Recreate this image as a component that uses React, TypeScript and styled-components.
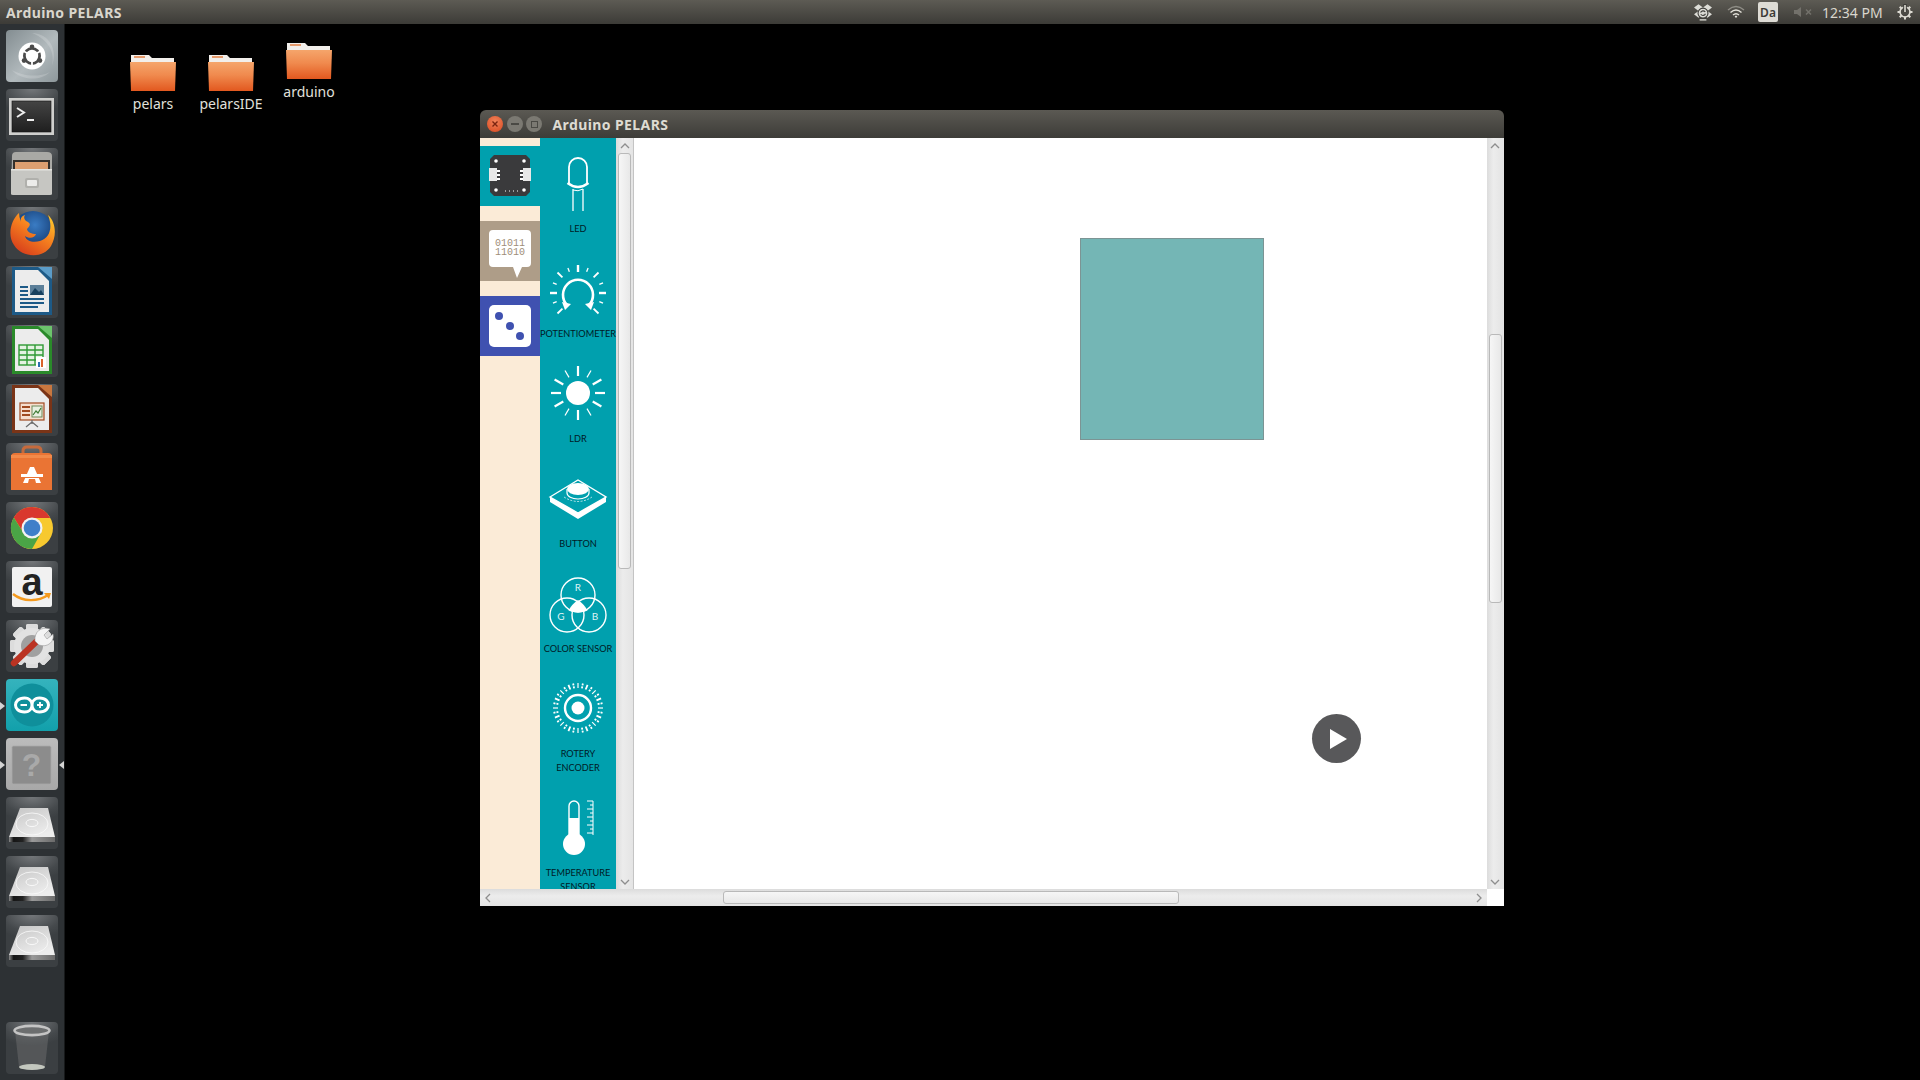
import styled, { createGlobalStyle } from "styled-components";

const TEAL = "#00a0ae";
const CREAM = "#fbebd7";

const GlobalStyle = createGlobalStyle`
  html, body {
    margin: 0;
    padding: 0;
    background: #000;
    overflow: hidden;
  }
  * {
    box-sizing: border-box;
  }
`;

const rays = (angles: number[], r1: number, r2: number, cx: number, cy: number) =>
  angles.map((a) => {
    const rad = (a * Math.PI) / 180;
    return {
      x1: cx + Math.sin(rad) * r1,
      y1: cy - Math.cos(rad) * r1,
      x2: cx + Math.sin(rad) * r2,
      y2: cy - Math.cos(rad) * r2,
    };
  });

/* launcher icons */

function DashIcon() {
  const gaps = rays([60, 180, 300], 5, 10.5, 26, 26);
  return (
    <svg width="52" height="52" viewBox="0 0 52 52">
      <path d="M26 3 C44 4 52 20 46 36 C50 18 38 8 26 3Z" fill="#fff" opacity="0.18" />
      <path d="M6 40 C14 50 34 52 44 42 C32 48 16 46 6 40Z" fill="#fff" opacity="0.18" />
      <circle cx="26" cy="26" r="13.5" fill="#fff" />
      <circle cx="26" cy="26" r="7.6" fill="none" stroke="#4a4a4a" strokeWidth="2.8" />
      {gaps.map((g, i) => (
        <line key={i} {...g} stroke="#fff" strokeWidth="1.8" />
      ))}
      <circle cx="26" cy="16.8" r="2.3" fill="#4a4a4a" />
      <circle cx="18" cy="30.6" r="2.3" fill="#4a4a4a" />
      <circle cx="34" cy="30.6" r="2.3" fill="#4a4a4a" />
    </svg>
  );
}

function TerminalIcon() {
  return (
    <svg width="52" height="52" viewBox="0 0 52 52">
      <defs>
        <linearGradient id="termGlass" x1="0" y1="0" x2="0" y2="1">
          <stop offset="0" stopColor="#444" />
          <stop offset="1" stopColor="#1f1f1f" />
        </linearGradient>
      </defs>
      <rect x="3" y="9" width="45" height="37" fill="#cfcfcd" />
      <rect x="6" y="12" width="39" height="31" fill="url(#termGlass)" stroke="#111" strokeWidth="0.6" />
      <path d="M11 19 L18 23.5 L11 28" fill="none" stroke="#eee" strokeWidth="2" />
      <rect x="21" y="30" width="7" height="2" fill="#eee" />
    </svg>
  );
}

function FilesIcon() {
  return (
    <svg width="52" height="52" viewBox="0 0 52 52">
      <path d="M6 8 Q6 4 10 4 H41 Q46 4 46 8 V46 H5Z" fill="#a9a9a5" />
      <rect x="7" y="12" width="37" height="10" fill="#35302b" />
      <rect x="9" y="14" width="33" height="7" fill="#dd9f70" />
      <path d="M5 21 H46 V46 Q46 47 44 47 H7 Q5 47 5 46Z" fill="#c6c6c2" />
      <rect x="5" y="21" width="41" height="1.5" fill="#e4e4e0" />
      <rect x="19" y="30" width="14" height="10" rx="2" fill="#b0b0ac" />
      <rect x="21" y="32" width="10" height="6" rx="1" fill="#ececea" />
    </svg>
  );
}

function FirefoxIcon() {
  return (
    <svg width="52" height="52" viewBox="0 0 52 52">
      <defs>
        <radialGradient id="ffBlue" cx="0.55" cy="0.35" r="0.6">
          <stop offset="0" stopColor="#3a7cc4" />
          <stop offset="1" stopColor="#12386f" />
        </radialGradient>
        <linearGradient id="ffOrange" x1="0.9" y1="0" x2="0.2" y2="1">
          <stop offset="0" stopColor="#ffd22e" />
          <stop offset="0.45" stopColor="#f6821f" />
          <stop offset="1" stopColor="#d5391b" />
        </linearGradient>
      </defs>
      <circle cx="27" cy="24" r="20" fill="url(#ffBlue)" />
      <path
        d="M13 6 C5 13 1 28 8 38 C16 51 37 52 45 39 C51 29 50 15 42 8 C47 20 44 31 34 34 C27 36 20 34 19 29 C23 32 29 31 30 27 C26 27 21 25 21 22 C24 19 25 17 22 15 C19 14 17 11 19 8 C16 9 14 11 15 15 C14 12 13 9 13 6Z"
        fill="url(#ffOrange)"
      />
    </svg>
  );
}

function DocIcon({ edge, accent, children }: { edge: string; accent: string; children: React.ReactNode }) {
  return (
    <svg width="52" height="52" viewBox="0 0 52 52">
      <path d="M6 1 H34 L46 13 V49 H6Z" fill={edge} />
      <path d="M9 4 H32 L43 15 V46 H9Z" fill="#ececec" />
      <path d="M32 1 H46 V13Z" fill={accent} />
      {children}
    </svg>
  );
}

function WriterIcon() {
  return (
    <DocIcon edge="#1d5a87" accent="#5b9cc8">
      <rect x="14" y="20" width="8" height="2" fill="#1d5a87" />
      <rect x="14" y="24" width="8" height="2" fill="#1d5a87" />
      <rect x="14" y="28" width="8" height="2" fill="#1d5a87" />
      <rect x="24" y="19" width="14" height="10" fill="#5c7f99" />
      <path d="M24 29 L29 22 L33 26 L35 24 L38 29Z" fill="#17405f" />
      <rect x="14" y="32" width="24" height="2" fill="#1d5a87" />
      <rect x="14" y="36" width="24" height="2" fill="#1d5a87" />
      <rect x="14" y="40" width="18" height="2" fill="#1d5a87" />
    </DocIcon>
  );
}

function CalcIcon() {
  return (
    <DocIcon edge="#2a8a2a" accent="#6cc46c">
      <rect x="13" y="20" width="24" height="20" fill="#e4f2e2" stroke="#2f9a35" strokeWidth="1.4" />
      <path d="M13 25 H37 M13 30 H37 M13 35 H37 M21 20 V40 M29 20 V40" stroke="#2f9a35" strokeWidth="1.4" />
      <rect x="30" y="32" width="10" height="11" fill="#fff" />
      <rect x="32" y="37" width="2" height="5" fill="#2d6fae" />
      <rect x="35" y="34" width="2" height="8" fill="#d9622b" />
    </DocIcon>
  );
}

function ImpressIcon() {
  return (
    <DocIcon edge="#7a3417" accent="#c9773f">
      <rect x="14" y="19" width="24" height="17" fill="#f6dfcf" stroke="#a04a20" strokeWidth="1.2" />
      <path d="M16 23 H24 M16 27 H24 M16 31 H24" stroke="#a04a20" strokeWidth="2" />
      <rect x="26" y="22" width="10" height="11" fill="#e8efe0" stroke="#6a8a5a" strokeWidth="1" />
      <path d="M27 31 L30 27 L32 29 L35 24" fill="none" stroke="#3e7b34" strokeWidth="1.2" />
      <path d="M26 36 V40 M26 38 L20 43 M26 38 L32 43" stroke="#6b6b6b" strokeWidth="1.2" />
    </DocIcon>
  );
}

function StoreIcon() {
  return (
    <svg width="52" height="52" viewBox="0 0 52 52">
      <path d="M17 15 V8 Q17 4 21 4 H31 Q35 4 35 8 V15" fill="none" stroke="#c56a3c" strokeWidth="3" />
      <path d="M5 14 Q5 10 9 10 H42 Q46 10 46 14 V47 H5Z" fill="#ea7434" />
      <path d="M5 12 H46 V15 H5Z" fill="#f28a4a" />
      <path d="M24 24 H28 L35 40 H30 L29 36 H23 L22 40 H17Z" fill="#fff" />
      <rect x="15" y="31" width="22" height="3" fill="#fff" />
      <rect x="15" y="34" width="22" height="1" fill="#ea7434" />
    </svg>
  );
}

function ChromeIcon() {
  return (
    <svg width="52" height="52" viewBox="0 0 52 52">
      <circle cx="26" cy="26" r="21" fill="#f7c92f" />
      <path d="M26 5 A21 21 0 0 0 7.8 15.5 L17.5 31 L26 16 H44.2 A21 21 0 0 0 26 5Z" fill="#d9382e" />
      <path d="M7.8 15.5 A21 21 0 0 0 26 47 L35 31 L17.5 31Z" fill="#4aa446" />
      <circle cx="26" cy="26" r="10.5" fill="#f2f2f2" />
      <circle cx="26" cy="26" r="8.3" fill="#3f7fc9" />
    </svg>
  );
}

function AmazonIcon() {
  return (
    <svg width="52" height="52" viewBox="0 0 52 52">
      <rect x="6" y="6" width="40" height="40" rx="2" fill="#f1f1f1" />
      <text x="26" y="34" textAnchor="middle" fontFamily="'Liberation Sans', sans-serif" fontWeight="700" fontSize="38" fill="#222">
        a
      </text>
      <path d="M7 33 C17 41 32 41 42 34" fill="none" stroke="#f49a1e" strokeWidth="2.4" />
      <path d="M38 32 L45 32 L43 38Z" fill="#f49a1e" />
    </svg>
  );
}

function SettingsIcon() {
  const teeth = [0, 45, 90, 135, 180, 225, 270, 315];
  return (
    <svg width="52" height="52" viewBox="0 0 52 52">
      {teeth.map((a) => (
        <rect key={a} x="20" y="4" width="12" height="44" rx="2" fill="#dcdcdc" transform={`rotate(${a} 26 26)`} />
      ))}
      <circle cx="26" cy="26" r="18" fill="#e2e2e2" />
      <circle cx="26" cy="26" r="11" fill="#a0a0a0" />
      <path d="M8 43 L32 20" stroke="#bb3322" strokeWidth="6.5" strokeLinecap="round" />
      <path d="M29 21 C28 12 35 6 44 9 L38 15 L41 19 L47 14 C49 22 41 28 33 25Z" fill="#f4f4f4" stroke="#999" strokeWidth="0.6" />
    </svg>
  );
}

function ArduinoIcon() {
  return (
    <svg width="52" height="52" viewBox="0 0 52 52">
      <circle cx="26" cy="26" r="21.5" fill="#0f8f9b" />
      <path
        d="M18.5 19 C12 19 9.5 23 9.5 26 C9.5 29 12 33 18.5 33 C24 33 26 29 26 26 C26 23 28 19 33.5 19 C40 19 42.5 23 42.5 26 C42.5 29 40 33 33.5 33 C28 33 26 29 26 26 C26 23 24 19 18.5 19Z"
        fill="none"
        stroke="#fff"
        strokeWidth="3"
      />
      <path d="M14.5 26 H21 M31 26 H37 M34 23 V29" stroke="#fff" strokeWidth="1.8" />
    </svg>
  );
}

function HelpIcon() {
  return (
    <svg width="52" height="52" viewBox="0 0 52 52">
      <rect x="6" y="8" width="39" height="38" rx="1.5" fill="#8c8c8c" stroke="#a8a8a8" strokeWidth="0.8" />
      <text x="25.5" y="38" textAnchor="middle" fontFamily="'Liberation Sans', sans-serif" fontWeight="700" fontSize="32" fill="#a9a9a9">
        ?
      </text>
    </svg>
  );
}

function DiskIcon({ id }: { id: string }) {
  return (
    <svg width="52" height="52" viewBox="0 0 52 52">
      <defs>
        <linearGradient id={id} x1="0" y1="0" x2="0.6" y2="1">
          <stop offset="0" stopColor="#c4c4c4" />
          <stop offset="1" stopColor="#ededed" />
        </linearGradient>
        <linearGradient id={`${id}Side`} x1="0" y1="0" x2="1" y2="0">
          <stop offset="0" stopColor="#8a8a8a" />
          <stop offset="0.1" stopColor="#151515" />
          <stop offset="0.3" stopColor="#222" />
          <stop offset="0.5" stopColor="#9a9a9a" />
          <stop offset="1" stopColor="#6a6a6a" />
        </linearGradient>
      </defs>
      <path d="M14 11 H42 L49 40 H3Z" fill={`url(#${id})`} />
      <rect x="3" y="40" width="46" height="5" fill={`url(#${id}Side)`} />
      <ellipse cx="26" cy="27" rx="16" ry="11" fill="none" stroke="#fafafa" strokeWidth="0.8" />
      <ellipse cx="26" cy="26" rx="6" ry="3.6" fill="none" stroke="#fafafa" strokeWidth="0.9" />
    </svg>
  );
}

function TrashIcon() {
  return (
    <svg width="52" height="52" viewBox="0 0 52 52">
      <path d="M9 9 L13 45 Q26 50 39 45 L43 9Z" fill="#8a8a8a" opacity="0.32" />
      <ellipse cx="26" cy="45" rx="13" ry="3" fill="#c3c7be" />
      <ellipse cx="26" cy="8.5" rx="17.5" ry="4.6" fill="#6c6e6f" stroke="#c4c4c4" strokeWidth="2.6" />
    </svg>
  );
}

/* tray icons */

function DropboxTray() {
  return (
    <svg width="18" height="18" viewBox="0 0 16 16">
      <path d="M4 1 L8 4 L4 7 L0 4Z M12 1 L16 4 L12 7 L8 4Z M4 7 L8 10 L4 13 L0 10Z M12 7 L16 10 L12 13 L8 10Z" fill="#dcdcd6" />
      <circle cx="8" cy="9" r="4.4" fill="#dcdcd6" stroke="#3f3e3a" strokeWidth="1" />
      <path d="M5.8 8.5 A2.4 2.4 0 0 1 10 8 M10.2 9.6 A2.4 2.4 0 0 1 6 10" fill="none" stroke="#3f3e3a" strokeWidth="1" />
      <path d="M5 15 H11" stroke="#dcdcd6" strokeWidth="1.2" />
    </svg>
  );
}

function WifiTray() {
  return (
    <svg width="18" height="14" viewBox="0 0 18 14">
      <path d="M1 5 Q9 -2 17 5" fill="none" stroke="#8f8d86" strokeWidth="1.4" />
      <path d="M3.5 7.5 Q9 2.5 14.5 7.5" fill="none" stroke="#e4e2da" strokeWidth="1.4" />
      <path d="M6 10 Q9 7.4 12 10" fill="none" stroke="#e4e2da" strokeWidth="1.4" />
      <path d="M7.6 11.6 L9 10.4 L10.4 11.6 L9 13Z" fill="#e4e2da" />
    </svg>
  );
}

function SoundTray() {
  return (
    <svg width="20" height="12" viewBox="0 0 20 12">
      <path d="M1 4 H4 L8 1 V11 L4 8 H1Z" fill="#73716b" />
      <path d="M13 3.5 L18 8.5 M18 3.5 L13 8.5" stroke="#73716b" strokeWidth="1.5" />
    </svg>
  );
}

function PowerTray() {
  const teeth = [0, 45, 90, 135, 180, 225, 270, 315];
  return (
    <svg width="16" height="16" viewBox="0 0 16 16">
      {teeth.map((a) => (
        <rect key={a} x="7" y="0.5" width="2" height="3" fill="#dcdad2" transform={`rotate(${a} 8 8)`} />
      ))}
      <circle cx="8" cy="8" r="5" fill="none" stroke="#dcdad2" strokeWidth="1.6" />
      <rect x="6.2" y="0" width="3.6" height="8" fill="#3f3e3a" />
      <rect x="7.2" y="1" width="1.6" height="7" fill="#dcdad2" />
    </svg>
  );
}

function Folder() {
  return (
    <svg width="46" height="37" viewBox="0 0 46 37">
      <defs>
        <linearGradient id="folderBody" x1="0" y1="0" x2="0" y2="1">
          <stop offset="0" stopColor="#f5a56b" />
          <stop offset="0.45" stopColor="#f08a4e" />
          <stop offset="1" stopColor="#e2581f" />
        </linearGradient>
      </defs>
      <path d="M1 1 H19 L22 4 H44 V9 H1Z" fill="#f2efeb" />
      <rect x="4" y="2" width="11" height="2" fill="#e59a6b" />
      <path d="M0 8 H46 L45 37 H1Z" fill="url(#folderBody)" />
    </svg>
  );
}

/* palette and rail drawings */

function ChipIcon() {
  return (
    <svg width="60" height="60" viewBox="0 0 60 60">
      <path d="M14 9 H46 L50 13 V46 L46 50 H14 L10 46 V13Z" fill="#3a3a3c" />
      <rect x="9" y="22" width="8" height="13" fill="#e8e8e8" />
      <rect x="43" y="22" width="8" height="13" fill="#e8e8e8" />
      <rect x="17" y="24" width="3" height="2" fill="#fff" />
      <rect x="17" y="28" width="3" height="2" fill="#fff" />
      <rect x="17" y="32" width="3" height="2" fill="#fff" />
      <rect x="40" y="24" width="3" height="2" fill="#fff" />
      <rect x="40" y="28" width="3" height="2" fill="#fff" />
      <rect x="40" y="32" width="3" height="2" fill="#fff" />
      <circle cx="16" cy="15" r="1.8" fill="#fff" />
      <circle cx="44" cy="15" r="1.8" fill="#fff" />
      <circle cx="16" cy="44" r="1.8" fill="#fff" />
      <circle cx="44" cy="44" r="1.8" fill="#fff" />
      <path d="M25 45 H26 M29 45 H30 M33 45 H34 M37 45 H38" stroke="#fff" strokeWidth="1" />
    </svg>
  );
}

function BinaryIcon() {
  return (
    <svg width="60" height="60" viewBox="0 0 60 60">
      <path d="M13 9 H47 Q51 9 51 13 V42 Q51 46 47 46 H42 L37 57 L33 46 H13 Q9 46 9 42 V13 Q9 9 13 9Z" fill="#fff" />
      <text x="30" y="25" textAnchor="middle" fontFamily="'Liberation Mono', monospace" fontSize="10" fill="#a08e78">
        01011
      </text>
      <text x="30" y="34" textAnchor="middle" fontFamily="'Liberation Mono', monospace" fontSize="10" fill="#a08e78">
        11010
      </text>
    </svg>
  );
}

function DiceIcon() {
  return (
    <svg width="60" height="60" viewBox="0 0 60 60">
      <rect x="9" y="9" width="42" height="42" rx="5" fill="#fff" />
      <circle cx="19" cy="20" r="4" fill="#3f51b0" />
      <circle cx="30" cy="30" r="4" fill="#3f51b0" />
      <circle cx="40" cy="40" r="4" fill="#3f51b0" />
    </svg>
  );
}

function LedIcon() {
  return (
    <PaletteSvg viewBox="0 0 76 84">
      <path d="M29 45 V29 A9 9 0 0 1 47 29 V45" fill="none" stroke="#fff" strokeWidth="1.8" />
      <path d="M27.5 45 Q38 53 48.5 45" fill="none" stroke="#fff" strokeWidth="2.4" />
      <path d="M33 51 V73 M43 51 V73" stroke="#fff" strokeWidth="1.3" />
      <path d="M33 52 Q38 54 43 51" fill="none" stroke="#fff" strokeWidth="1" />
    </PaletteSvg>
  );
}

function PotIcon() {
  const long = rays([0, 90, 270], 21, 28, 38, 50);
  const mid = rays([45, 315, 135, 225], 22, 29, 38, 50);
  const short = rays([22, 338, 68, 292, 112, 248], 23, 27, 38, 50);
  return (
    <PaletteSvg viewBox="0 0 76 84">
      <path d="M27 62 A15 15 0 1 1 49 62" fill="none" stroke="#fff" strokeWidth="2.6" />
      <path d="M22 59 L31 61 L25 67Z M54 59 L45 61 L51 67Z" fill="#fff" />
      {long.map((r, i) => <line key={i} {...r} stroke="#fff" strokeWidth="2.4" />)}
      {mid.map((r, i) => <line key={i} {...r} stroke="#fff" strokeWidth="1.8" />)}
      {short.map((r, i) => <line key={i} {...r} stroke="#fff" strokeWidth="1.3" />)}
    </PaletteSvg>
  );
}

function LdrIcon() {
  const thick = rays([0, 60, 90, 120, 180, 240, 270, 300], 17, 27, 38, 45);
  const thin = rays([30, 150, 210, 330], 18, 26, 38, 45);
  return (
    <PaletteSvg viewBox="0 0 76 84">
      <circle cx="38" cy="45" r="12" fill="#fff" />
      {thick.map((r, i) => <line key={i} {...r} stroke="#fff" strokeWidth="2.2" />)}
      {thin.map((r, i) => <line key={i} {...r} stroke="#fff" strokeWidth="1.2" />)}
    </PaletteSvg>
  );
}

function ButtonIcon() {
  return (
    <PaletteSvg viewBox="0 0 76 84">
      <path d="M10 44 L38 27 L66 44 L38 60Z" fill="none" stroke="#fff" strokeWidth="1.4" />
      <path d="M10 44 V49 L38 66 L66 49 V44 L38 60Z" fill="#fff" />
      <path d="M27 36 V40 A11 6 0 0 0 49 40 V36" fill="none" stroke="#fff" strokeWidth="1.2" />
      <ellipse cx="38" cy="36" rx="11" ry="6" fill="#fff" />
      <path d="M24 44 Q38 53 52 44" fill="none" stroke="#fff" strokeWidth="0.7" strokeDasharray="2 1.5" />
    </PaletteSvg>
  );
}

function ColorIcon() {
  return (
    <PaletteSvg viewBox="0 0 76 84">
      <path d="M38 42 Q44 46 47.5 52.5 Q38 56.5 28.5 52.5 Q32 46 38 42Z" fill="#fff" />
      <circle cx="38" cy="37" r="17" fill="none" stroke="#fff" strokeWidth="1.4" />
      <circle cx="27" cy="57" r="17" fill="none" stroke="#fff" strokeWidth="1.4" />
      <circle cx="49" cy="57" r="17" fill="none" stroke="#fff" strokeWidth="1.4" />
      <SensorLetter x="38" y="33">R</SensorLetter>
      <SensorLetter x="21" y="62">G</SensorLetter>
      <SensorLetter x="55" y="62">B</SensorLetter>
    </PaletteSvg>
  );
}

function RotaryIcon() {
  const angles = Array.from({ length: 32 }, (_, i) => i * 11.25);
  const ticks = rays(angles, 20, 25, 38, 45);
  return (
    <PaletteSvg viewBox="0 0 76 84">
      <circle cx="38" cy="45" r="13" fill="none" stroke="#fff" strokeWidth="2.4" />
      <circle cx="38" cy="45" r="6.5" fill="#fff" />
      {ticks.map((r, i) => (
        <line key={i} {...r} stroke="#fff" strokeWidth={i % 4 === 0 ? 1.2 : 1.8} strokeDasharray={i % 2 ? "2 1" : undefined} />
      ))}
    </PaletteSvg>
  );
}

function TempIcon() {
  const marks = [19, 23, 27, 31, 35, 39, 43, 47, 51];
  return (
    <PaletteSvg viewBox="0 0 76 84">
      <path d="M29 54 V24 A5 5 0 0 1 39 24 V54" fill="none" stroke="#fff" strokeWidth="1.4" />
      <rect x="29" y="36" width="10" height="22" fill="#fff" />
      <circle cx="34" cy="62" r="11" fill="#fff" />
      <path d="M53 19 V53" stroke="#fff" strokeWidth="1" />
      {marks.map((y, i) => (
        <line key={y} x1={i % 2 ? 50 : 47} y1={y} x2="53" y2={y} stroke="#fff" strokeWidth="1" />
      ))}
    </PaletteSvg>
  );
}

const PALETTE = [
  { label: ["LED"], Icon: LedIcon },
  { label: ["POTENTIOMETER"], Icon: PotIcon },
  { label: ["LDR"], Icon: LdrIcon },
  { label: ["BUTTON"], Icon: ButtonIcon },
  { label: ["COLOR SENSOR"], Icon: ColorIcon },
  { label: ["ROTERY", "ENCODER"], Icon: RotaryIcon },
  { label: ["TEMPERATURE", "SENSOR"], Icon: TempIcon },
];

const LAUNCHER = [
  { Icon: DashIcon, bg: "dash" },
  { Icon: TerminalIcon },
  { Icon: FilesIcon },
  { Icon: FirefoxIcon },
  { Icon: WriterIcon },
  { Icon: CalcIcon },
  { Icon: ImpressIcon },
  { Icon: StoreIcon },
  { Icon: ChromeIcon },
  { Icon: AmazonIcon },
  { Icon: SettingsIcon },
  { Icon: ArduinoIcon, bg: "arduino" },
  { Icon: HelpIcon, bg: "help" },
  { Icon: () => <DiskIcon id="disk1" /> },
  { Icon: () => <DiskIcon id="disk2" /> },
  { Icon: () => <DiskIcon id="disk3" /> },
];

function App() {
  return (
    <Screen>
      <GlobalStyle />
      <TopBar>
        <AppTitle>Arduino PELARS</AppTitle>
        <Tray>
          <TraySlot $w={33}><DropboxTray /></TraySlot>
          <TraySlot $w={33}><WifiTray /></TraySlot>
          <KeyboardBadge>Da</KeyboardBadge>
          <TraySlot $w={38}><SoundTray /></TraySlot>
          <Clock>12:34 PM</Clock>
          <TraySlot $w={30}><PowerTray /></TraySlot>
        </Tray>
      </TopBar>

      <Workspace>
        <Launcher>
          {LAUNCHER.map(({ Icon, bg }, i) => (
            <Tile key={i} $kind={bg}>
              {bg === "arduino" && <PipLeft />}
              {bg === "help" && <PipLeft />}
              {bg === "help" && <PipRight />}
              <Icon />
            </Tile>
          ))}
          <LauncherGap />
          <Tile>
            <TrashIcon />
          </Tile>
        </Launcher>

        <Desktop>
          <DesktopIcon $x={50} $y={30}>
            <Folder />
            <FolderName>pelars</FolderName>
          </DesktopIcon>
          <DesktopIcon $x={128} $y={30}>
            <Folder />
            <FolderName>pelarsIDE</FolderName>
          </DesktopIcon>
          <DesktopIcon $x={206} $y={18}>
            <Folder />
            <FolderName>arduino</FolderName>
          </DesktopIcon>

          <AppWindow>
            <TitleBar>
              <CloseDot>
                <svg width="8" height="8" viewBox="0 0 8 8">
                  <path d="M1.5 1.5 L6.5 6.5 M6.5 1.5 L1.5 6.5" stroke="#7a2410" strokeWidth="1.4" />
                </svg>
              </CloseDot>
              <GreyDot>
                <DotMinus />
              </GreyDot>
              <GreyDot>
                <DotSquare />
              </GreyDot>
              <WindowTitle>Arduino PELARS</WindowTitle>
            </TitleBar>

            <Content>
              <Rail>
                <RailTab $bg={TEAL}><ChipIcon /></RailTab>
                <RailTab $bg="#ae9d88"><BinaryIcon /></RailTab>
                <RailTab $bg="#3f51b0"><DiceIcon /></RailTab>
              </Rail>

              <Palette>
                {PALETTE.map(({ label, Icon }) => (
                  <PaletteItem key={label[0]}>
                    <Icon />
                    {label.map((line) => (
                      <PaletteLabel key={line}>{line}</PaletteLabel>
                    ))}
                  </PaletteItem>
                ))}
              </Palette>

              <VScroll $w={18} $edge="#c4c4c4">
                <ArrowSlot>
                  <Chevron dir="up" />
                </ArrowSlot>
                <VThumb $top={0} $height={416} />
                <VSpacer />
                <ArrowSlot>
                  <Chevron dir="down" />
                </ArrowSlot>
              </VScroll>

              <Canvas>
                <BlockNode />
                <PlayButton>
                  <svg width="17" height="20" viewBox="0 0 17 20">
                    <path d="M0 0 L17 10 L0 20Z" fill="#fff" />
                  </svg>
                </PlayButton>
              </Canvas>

              <VScroll $w={17} $edge="#e6e6e6">
                <ArrowSlot>
                  <Chevron dir="up" />
                </ArrowSlot>
                <VThumb $top={181} $height={269} />
                <VSpacer />
                <ArrowSlot>
                  <Chevron dir="down" />
                </ArrowSlot>
              </VScroll>
            </Content>

            <BottomRow>
              <HScroll>
                <HArrowSlot>
                  <Chevron dir="left" />
                </HArrowSlot>
                <HThumb />
                <VSpacer />
                <HArrowSlot>
                  <Chevron dir="right" />
                </HArrowSlot>
              </HScroll>
              <Corner />
            </BottomRow>
          </AppWindow>
        </Desktop>
      </Workspace>
    </Screen>
  );
}

function Chevron({ dir }: { dir: "up" | "down" | "left" | "right" }) {
  const turn = { up: 0, right: 90, down: 180, left: 270 }[dir];
  return (
    <svg width="10" height="10" viewBox="0 0 10 10" style={{ transform: `rotate(${turn}deg)` }}>
      <path d="M1 7 L5 3 L9 7" fill="none" stroke="#8e8e8e" strokeWidth="1.3" />
    </svg>
  );
}

const Screen = styled.div`
  display: flex;
  flex-direction: column;
  width: 1920px;
  height: 1080px;
  background: #000;
  font-family: "Noto Sans", "Open Sans", sans-serif;
  overflow: hidden;
`;

const TopBar = styled.div`
  display: flex;
  align-items: center;
  justify-content: space-between;
  flex: none;
  height: 24px;
  padding-left: 6px;
  background: linear-gradient(to bottom, #5d5b54, #3c3b37);
`;

const AppTitle = styled.div`
  font-family: "Noto Sans", sans-serif;
  font-size: 14px;
  font-weight: 700;
  letter-spacing: 0.4px;
  color: #d9d6cd;
`;

const Tray = styled.div`
  display: flex;
  align-items: center;
  height: 24px;
`;

const TraySlot = styled.div<{ $w: number }>`
  display: flex;
  align-items: center;
  justify-content: center;
  width: ${(p) => p.$w}px;
`;

const KeyboardBadge = styled.div`
  display: flex;
  align-items: center;
  justify-content: center;
  width: 20px;
  height: 20px;
  margin: 0 6px 0 6px;
  border-radius: 2px;
  background: #dedcd5;
  color: #3c3b37;
  font-size: 12px;
  font-weight: 600;
`;

const Clock = styled.div`
  width: 68px;
  font-size: 14px;
  color: #d9d6cd;
  white-space: nowrap;
`;

const Workspace = styled.div`
  display: flex;
  flex: 1;
  min-height: 0;
`;

const Launcher = styled.div`
  display: flex;
  flex-direction: column;
  flex: none;
  gap: 7px;
  width: 65px;
  padding: 6px;
  background: #2d3134;
  border-right: 1px solid #17191a;
`;

const LauncherGap = styled.div`
  flex: 1;
`;

const tileBackground = (kind?: string) => {
  if (kind === "dash") return "linear-gradient(135deg, #838d91, #b2babd 55%, #8d979b)";
  if (kind === "arduino") return "linear-gradient(to bottom, #35b3bd, #12a0ab)";
  if (kind === "help") return "linear-gradient(to bottom, #bcbcbc, #a8a8a8)";
  return "radial-gradient(ellipse 80% 45% at 50% 0%, #74777a, #45494c 70%, #3b3f42)";
};

const Tile = styled.div<{ $kind?: string }>`
  position: relative;
  flex: none;
  width: 52px;
  height: 52px;
  border-radius: 4px;
  background: ${(p) => tileBackground(p.$kind)};

  svg {
    display: block;
  }
`;

const PipLeft = styled.div`
  position: absolute;
  left: -6px;
  top: 23px;
  border-top: 4px solid transparent;
  border-bottom: 4px solid transparent;
  border-left: 5px solid #d4d4d4;
`;

const PipRight = styled.div`
  position: absolute;
  right: -6px;
  top: 23px;
  border-top: 4px solid transparent;
  border-bottom: 4px solid transparent;
  border-right: 5px solid #d4d4d4;
`;

const Desktop = styled.div`
  position: relative;
  flex: 1;
`;

const DesktopIcon = styled.div<{ $x: number; $y: number }>`
  position: absolute;
  left: ${(p) => p.$x}px;
  top: ${(p) => p.$y}px;
  display: flex;
  flex-direction: column;
  align-items: center;
  width: 76px;
`;

const FolderName = styled.div`
  margin-top: 3px;
  font-size: 14px;
  line-height: 19px;
  color: #e0e0dc;
`;

const AppWindow = styled.div`
  position: absolute;
  left: 415px;
  top: 86px;
  display: flex;
  flex-direction: column;
  width: 1024px;
  height: 796px;
  border-radius: 6px 6px 0 0;
  overflow: hidden;
`;

const TitleBar = styled.div`
  display: flex;
  align-items: center;
  flex: none;
  height: 28px;
  padding-left: 7px;
  gap: 3.5px;
  background: linear-gradient(to bottom, #5b5953, #3d3c38);
`;

const CloseDot = styled.div`
  display: flex;
  align-items: center;
  justify-content: center;
  width: 16px;
  height: 16px;
  border-radius: 50%;
  background: radial-gradient(circle at 50% 35%, #f1835a, #d8481f);
`;

const GreyDot = styled.div`
  display: flex;
  align-items: center;
  justify-content: center;
  width: 16px;
  height: 16px;
  border-radius: 50%;
  background: #7b7972;
`;

const DotMinus = styled.div`
  width: 8px;
  height: 2px;
  background: #4a4944;
`;

const DotSquare = styled.div`
  width: 7px;
  height: 7px;
  border: 1px solid #4a4944;
`;

const WindowTitle = styled.div`
  margin-left: 7px;
  font-size: 14px;
  font-weight: 700;
  letter-spacing: 0.4px;
  color: #dedbd2;
`;

const Content = styled.div`
  display: flex;
  flex: 1;
  min-height: 0;
`;

const Rail = styled.div`
  display: flex;
  flex-direction: column;
  flex: none;
  gap: 15px;
  width: 60px;
  padding-top: 8px;
  background: ${CREAM};
`;

const RailTab = styled.div<{ $bg: string }>`
  width: 60px;
  height: 60px;
  background: ${(p) => p.$bg};

  svg {
    display: block;
  }
`;

const Palette = styled.div`
  flex: none;
  width: 76px;
  background: ${TEAL};
  overflow: hidden;
`;

const PaletteItem = styled.div`
  display: flex;
  flex-direction: column;
  align-items: center;
  padding-bottom: 7px;
`;

const PaletteSvg = styled.svg`
  display: block;
  width: 76px;
  height: 84px;
  flex: none;
`;

const SensorLetter = styled.text`
  font-family: "Lato", sans-serif;
  font-size: 10px;
  fill: #dff3f5;
  text-anchor: middle;
`;

const PaletteLabel = styled.div`
  font-family: "Lato", sans-serif;
  font-size: 9.2px;
  line-height: 14px;
  color: #001a26;
  white-space: nowrap;
`;

const VScroll = styled.div<{ $w: number; $edge: string }>`
  display: flex;
  flex-direction: column;
  align-items: center;
  flex: none;
  width: ${(p) => p.$w}px;
  background: linear-gradient(to right, #dcdcdc, #ececec 40%, #e4e4e4);
  border-right: 1px solid ${(p) => p.$edge};
`;

const ArrowSlot = styled.div`
  display: flex;
  align-items: center;
  justify-content: center;
  flex: none;
  width: 100%;
  height: 15px;
`;

const VThumb = styled.div<{ $top: number; $height: number }>`
  flex: none;
  width: 13px;
  margin-top: ${(p) => p.$top}px;
  height: ${(p) => p.$height}px;
  border: 1px solid #b9b9b9;
  border-radius: 3px;
  background: linear-gradient(to right, #f6f6f6, #e8e8e8);
`;

const VSpacer = styled.div`
  flex: 1;
`;

const Canvas = styled.div`
  position: relative;
  flex: 1;
  background: #fff;
`;

const BlockNode = styled.div`
  position: absolute;
  left: 446px;
  top: 100px;
  width: 184px;
  height: 202px;
  background: #74b6b5;
  border: 1px solid #7c9494;
`;

const PlayButton = styled.div`
  position: absolute;
  left: 678px;
  top: 576px;
  display: flex;
  align-items: center;
  justify-content: center;
  width: 49px;
  height: 49px;
  padding-left: 3px;
  border-radius: 50%;
  background: #58585a;
`;

const BottomRow = styled.div`
  display: flex;
  flex: none;
  height: 17px;
`;

const HScroll = styled.div`
  display: flex;
  align-items: center;
  flex: 1;
  background: linear-gradient(to bottom, #dcdcdc, #ececec 40%, #e4e4e4);
`;

const HArrowSlot = styled.div`
  display: flex;
  align-items: center;
  justify-content: center;
  flex: none;
  width: 16px;
  height: 100%;
`;

const HThumb = styled.div`
  flex: none;
  width: 456px;
  height: 13px;
  margin-left: 227px;
  border: 1px solid #b9b9b9;
  border-radius: 3px;
  background: linear-gradient(to bottom, #f6f6f6, #e8e8e8);
`;

const Corner = styled.div`
  flex: none;
  width: 17px;
  background: #fff;
`;

export default App;
